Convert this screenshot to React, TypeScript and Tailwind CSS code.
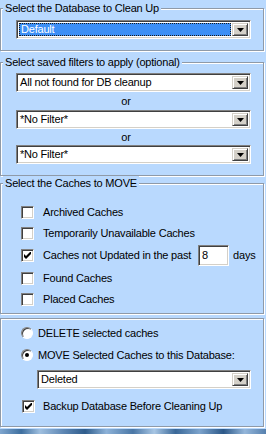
import React from "react";

const font = "font-['Liberation_Sans',Arial,sans-serif] text-[11px] tracking-[-0.2px] text-black";

const Arrow = () => (
  <svg width="7" height="4" viewBox="0 0 7 4">
    <polygon points="0,0 7,0 3.5,4" fill="#000" />
  </svg>
);

const Combo = ({ value, focused, className }: { value: string; focused?: boolean; className: string }) => (
  <div
    className={`flex h-[19px] bg-white border border-t-[#808080] border-l-[#808080] border-r-white border-b-white shadow-[inset_1px_1px_0_#404040,inset_-1px_-1px_0_#d4d0c8] p-[2px] ${className}`}
  >
    <div className="flex-1 flex items-center pr-[1px]">
      {focused ? (
        <div className="h-full w-full bg-[#3d8ff5] outline-1 outline-dotted outline-[#1a1a1a] -outline-offset-1 text-white flex items-center pl-[2px]">
          {value}
        </div>
      ) : (
        <span className="pl-[1px]">{value}</span>
      )}
    </div>
    <div className="w-[16px] h-full bg-[#d4d0c8] border border-t-[#d4d0c8] border-l-[#d4d0c8] border-r-[#404040] border-b-[#404040] shadow-[inset_1px_1px_0_#fff,inset_-1px_-1px_0_#808080] flex items-center justify-center">
      <Arrow />
    </div>
  </div>
);

const Check = ({ checked }: { checked?: boolean }) => (
  <div className="w-[13px] h-[13px] shrink-0 bg-white border border-t-[#808080] border-l-[#808080] border-r-white border-b-white shadow-[inset_1px_1px_0_#404040,inset_-1px_-1px_0_#d4d0c8] flex items-center justify-center">
    {checked && (
      <svg width="7" height="7" viewBox="0 0 7 7">
        <path d="M0 2 L2 4 L7 -1 L7 2 L2 7 L0 5 Z" fill="#000" />
      </svg>
    )}
  </div>
);

const Radio = ({ checked }: { checked?: boolean }) => (
  <div className="w-[12px] h-[12px] shrink-0 rounded-full bg-white border border-t-[#808080] border-l-[#808080] border-r-white border-b-white shadow-[inset_1px_1px_0_#404040] flex items-center justify-center">
    {checked && <div className="w-[4px] h-[4px] rounded-full bg-black" />}
  </div>
);

const Group = ({
  title,
  className,
  children,
}: {
  title?: string;
  className: string;
  children: React.ReactNode;
}) => (
  <div
    className={`relative w-[264px] border border-[#8f9aa8] shadow-[inset_1px_1px_0_#fff,1px_1px_0_#fff] ${className}`}
  >
    {title && (
      <span className="absolute left-[2px] top-[-8px] px-[2px] leading-[14px] bg-[#b9d9fe]">{title}</span>
    )}
    {children}
  </div>
);

const CheckRow = ({ label, checked, h }: { label: string; checked?: boolean; h: string }) => (
  <div className={`flex items-center pl-[20px] ${h}`}>
    <Check checked={checked} />
    <span className="ml-[9px]">{label}</span>
  </div>
);

export default function App() {
  return (
    <div className={`w-[266px] h-[434px] bg-[#b9d9fe] flex flex-col pt-[8px] overflow-hidden ${font}`}>
      <Group title="Select the Database to Clean Up" className="h-[43px] pt-[11px] pl-[15px]">
        <Combo value="Default" focused className="w-[235px]" />
      </Group>

      <Group title="Select saved filters to apply (optional)" className="mt-[11px] h-[114px] pt-[10px] pl-[15px]">
        <Combo value="All not found for DB cleanup" className="w-[235px]" />
        <div className="w-[220px] h-[18px] flex items-center justify-center">or</div>
        <Combo value="*No Filter*" className="w-[235px]" />
        <div className="w-[220px] h-[16px] flex items-center justify-center">or</div>
        <Combo value="*No Filter*" className="w-[235px]" />
      </Group>

      <Group title="Select the Caches to MOVE" className="mt-[7px] h-[131px] pt-[18px]">
        <CheckRow label="Archived Caches" h="h-[21px]" />
        <CheckRow label="Temporarily Unavailable Caches" h="h-[21px]" />
        <div className="flex items-center pl-[20px] h-[23px]">
          <Check checked />
          <span className="ml-[9px]">Caches not Updated in the past</span>
          <div className="ml-[7px] w-[31px] h-[21px] bg-white border border-t-[#808080] border-l-[#808080] border-r-white border-b-white shadow-[inset_1px_1px_0_#404040,inset_-1px_-1px_0_#d4d0c8] flex items-center pl-[3px]">
            8
          </div>
          <span className="ml-[4px]">days</span>
        </div>
        <CheckRow label="Found Caches" h="h-[22px]" />
        <CheckRow label="Placed Caches" h="h-[21px]" />
      </Group>

      <Group className="mt-[4px] h-[109px] pt-[4px]">
        <div className="flex items-center pl-[20px] h-[20px]">
          <Radio />
          <span className="ml-[5px]">DELETE selected caches</span>
        </div>
        <div className="flex items-center pl-[20px] h-[20px] mt-[2px]">
          <Radio checked />
          <span className="ml-[5px]">MOVE Selected Caches to this Database:</span>
        </div>
        <div className="pl-[36px] mt-[5px]">
          <Combo value="Deleted" className="w-[214px]" />
        </div>
        <div className="flex items-center pl-[21px] h-[20px] mt-[7px]">
          <Check checked />
          <span className="ml-[8px]">Backup Database Before Cleaning Up</span>
        </div>
      </Group>

      <div className="mt-[2px] flex-1 bg-[linear-gradient(90deg,#7fa6cf_0%,#3e6f9f_8%,#9fbfdf_15%,#5d86b3_24%,#2f5d8c_32%,#8db2d8_40%,#4a77a6_50%,#a8c6e4_58%,#3a6898_66%,#7ca3cc_75%,#2c5888_84%,#94b6da_92%,#5680ae_100%)]" />
    </div>
  );
}
